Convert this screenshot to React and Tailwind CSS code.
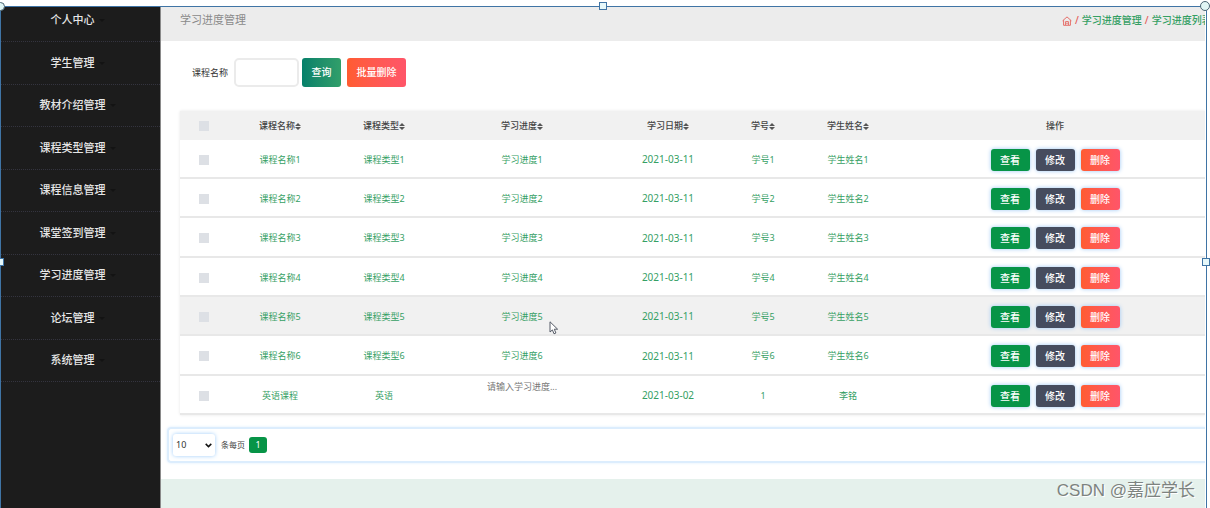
import clsx from 'clsx';

const menu = [
  '个人中心',
  '学生管理',
  '教材介绍管理',
  '课程类型管理',
  '课程信息管理',
  '课堂签到管理',
  '学习进度管理',
  '论坛管理',
  '系统管理',
];

const columns = ['课程名称', '课程类型', '学习进度', '学习日期', '学号', '学生姓名'];

const rows = [1, 2, 3, 4, 5, 6].map((n) => ({
  id: n,
  course: `课程名称${n}`,
  type: `课程类型${n}`,
  progress: `学习进度${n}`,
  date: '2021-03-11',
  number: `学号${n}`,
  student: `学生姓名${n}`,
}));

rows.push({
  id: 7,
  course: '英语课程',
  type: '英语',
  progress: '',
  date: '2021-03-02',
  number: '1',
  student: '李铭',
});

const activeRow = 5;

function SortIcon() {
  return (
    <svg className="inline-block h-[7px] w-[6px] align-middle" viewBox="0 0 6 7" fill="#555" aria-hidden="true">
      <path d="M3 0 L6 3 H0 Z M0 4 H6 L3 7 Z" />
    </svg>
  );
}

function HomeIcon() {
  return (
    <svg className="h-[10px] w-[10px] shrink-0" viewBox="0 0 10 10" fill="none" stroke="#e4605a" aria-hidden="true">
      <path d="M0.6 4.8 L5 0.9 L9.4 4.8 M1.6 4.2 V9.3 H8.4 V4.2 M3.6 9 V5.6 H6.4 V9" strokeWidth="0.9" />
      <path d="M4.2 7.4 H5.8" strokeWidth="0.7" />
    </svg>
  );
}

function Pointer() {
  return (
    <svg className="absolute top-6 left-[113px] h-[14px] w-[10px]" viewBox="0 0 10 14" aria-hidden="true">
      <path
        d="M1 0.8 V11 L3.4 8.9 L5 12.8 L6.9 12 L5.3 8.2 H8.6 Z"
        fill="#fff"
        stroke="#555b66"
        strokeWidth="1"
        strokeLinejoin="round"
      />
    </svg>
  );
}

function ActionButton({ className, children }) {
  return (
    <button
      type="button"
      className={clsx(
        'h-[22px] w-[39px] rounded-[3px] text-[10px] leading-[22px] font-medium text-white shadow-[0_0_4px_#9cc8f5]',
        className
      )}
    >
      {children}
    </button>
  );
}

function Checkbox({ label }) {
  return (
    <input
      type="checkbox"
      aria-label={label}
      className="mx-auto block h-[10px] w-[10px] appearance-none bg-[#dde0e5] checked:bg-[#079447]"
    />
  );
}

function Sidebar() {
  return (
    <aside className="w-40 shrink-0 overflow-hidden border-r border-[#8a8a8a] bg-[#1c1c1c]">
      <nav className="-mt-[7px]">
        {menu.map((item) => (
          <a
            key={item}
            href="#"
            className="flex h-[42px] items-center justify-center border-b border-dotted border-[#34343f] text-[11px] font-medium text-[#e6e6e6] even:h-[43px]"
          >
            {item}
            <span className="mr-[6px] ml-1 border-x-[3px] border-t-[3px] border-x-transparent border-t-[#131313]" />
          </a>
        ))}
      </nav>
    </aside>
  );
}

function ProgressTable() {
  return (
    <table className="w-full table-fixed border-collapse text-center text-[9px] shadow-[0_0_3px_#e6e6e6]">
      <colgroup>
        <col className="w-12" />
        <col className="w-[104px]" />
        <col className="w-[104px]" />
        <col className="w-[172px]" />
        <col className="w-[120px]" />
        <col className="w-[70px]" />
        <col className="w-[100px]" />
        <col />
      </colgroup>
      <thead>
        <tr className="h-[29px] bg-[#f1f1f1] text-[#444]">
          <th>
            <Checkbox label="全选" />
          </th>
          {columns.map((name) => (
            <th key={name} className="font-medium">
              {name}
              <SortIcon />
            </th>
          ))}
          <th className="pl-[7px] font-medium">操作</th>
        </tr>
      </thead>
      <tbody>
        {rows.map((row) => (
          <tr
            key={row.id}
            className={clsx(
              'h-[39px] text-[#35a064] shadow-[inset_0_-2px_0_#e8e8e8] nth-[3n]:h-10',
              row.id === activeRow && 'bg-[#f1f1f1]'
            )}
          >
            <td>
              <Checkbox label={row.course} />
            </td>
            <td>{row.course}</td>
            <td>{row.type}</td>
            {row.progress ? (
              <td className="relative">
                {row.progress}
                {row.id === activeRow && <Pointer />}
              </td>
            ) : (
              <td className="pt-1 align-top text-[#777]">请输入学习进度...</td>
            )}
            <td className="text-[10px]">{row.date}</td>
            <td>{row.number}</td>
            <td>{row.student}</td>
            <td className="pl-[7px]">
              <div className="flex justify-center gap-[6px]">
                <ActionButton className="bg-[#079447]">查看</ActionButton>
                <ActionButton className="bg-[#464c5e]">修改</ActionButton>
                <ActionButton className="bg-linear-to-r from-[#ff5c30] to-[#ff5569]">删除</ActionButton>
              </div>
            </td>
          </tr>
        ))}
      </tbody>
    </table>
  );
}

function Pagination() {
  return (
    <div className="mt-3 ml-[6px] flex h-9 items-center rounded-l border-2 border-r-0 border-[#dcedfd] pl-1 text-[8px] text-[#444] shadow-[0_0_3px_#dcedfd]">
      <div className="relative">
        <select
          id="page-size"
          defaultValue="10"
          className="block h-[22px] w-[42px] appearance-none rounded-[3px] bg-white pl-[3px] text-[9px] text-[#333] shadow-[0_0_4px_#9fcdfa]"
        >
          <option>10</option>
          <option>25</option>
          <option>50</option>
        </select>
        <svg
          className="pointer-events-none absolute top-[9px] right-[3px] h-[5px] w-[7px]"
          viewBox="0 0 7 5"
          fill="none"
          stroke="#111"
          strokeWidth="1.5"
          aria-hidden="true"
        >
          <path d="M0.7 0.9 L3.5 3.6 L6.3 0.9" />
        </svg>
      </div>
      <label htmlFor="page-size" className="mr-1 ml-[6px]">
        条每页
      </label>
      <button type="button" className="h-4 w-[18px] rounded-[3px] bg-[#079447] text-[9px] leading-4 text-white">
        1
      </button>
    </div>
  );
}

function Frame() {
  return (
    <div className="pointer-events-none absolute top-[6px] right-[3px] bottom-0 left-0 border-x border-t border-[#3f74a5]">
      <span className="absolute -top-[5px] -left-[5px] h-[9px] w-[9px] rounded-full border border-[#4b6573] bg-[#e0f5f4]" />
      <span className="absolute -top-[5px] left-1/2 -ml-[5px] h-2 w-2 border border-[#3f74a5] bg-[#e6f8fa]" />
      <span className="absolute -top-[6px] -right-[4px] h-[10px] w-[10px] rounded-full border border-[#4b6573] bg-[#e0f5f4]" />
      <span className="absolute top-1/2 -left-[5px] h-2 w-2 border border-[#3f74a5] bg-[#e6f8fa]" />
      <span className="absolute top-1/2 -right-[4px] h-2 w-2 border border-[#3f74a5] bg-[#e6f8fa]" />
    </div>
  );
}

export default function App() {
  return (
    <div className="relative flex min-h-screen overflow-hidden bg-white pt-[7px] pr-[5px] pl-px font-['Noto_Sans','Noto_Sans_CJK_SC',sans-serif]">
      <Sidebar />

      <main className="flex min-w-0 flex-1 flex-col overflow-hidden">
        <header className="flex h-[34px] items-center justify-between bg-[#ececec] pb-[7px] pl-[19px]">
          <h1 className="text-[11px] text-[#8a8a8a]">学习进度管理</h1>
          <nav className="flex w-[143px] items-center gap-[3px] overflow-hidden text-[10px] font-medium whitespace-nowrap text-[#35a064]">
            <a href="#" aria-label="首页">
              <HomeIcon />
            </a>
            <span className="text-[#e4605a]">/</span>
            <a href="#">学习进度管理</a>
            <span className="text-[#e4605a]">/</span>
            <a href="#">学习进度列表</a>
          </nav>
        </header>

        <form className="mt-[17px] mb-6 flex items-center pl-[31px] text-[9px]">
          <label htmlFor="course" className="mr-[6px] text-[#333]">
            课程名称
          </label>
          <input
            id="course"
            type="text"
            className="h-[29px] w-[65px] rounded-[5px] border-2 border-[#ebebeb] bg-white px-2 outline-none"
          />
          <button
            type="button"
            className="ml-[3px] h-[29px] w-[39px] rounded-[3px] bg-linear-to-r from-[#04806a] to-[#319f6a] text-[10px] font-medium text-white"
          >
            查询
          </button>
          <button
            type="button"
            className="ml-[6px] h-[29px] w-[59px] rounded-[3px] bg-linear-to-r from-[#ff5c30] to-[#ff5569] text-[10px] font-medium text-white"
          >
            批量删除
          </button>
        </form>

        <div className="pl-[19px]">
          <ProgressTable />
        </div>

        <Pagination />

        <footer className="mt-4 min-h-7 flex-1 bg-[#e5f1ec]" />
      </main>

      <Frame />
      <p className="absolute right-[15px] bottom-1 font-['Liberation_Sans','Noto_Sans_CJK_SC',sans-serif] text-[17px] leading-[26px] text-[#7d8380] [text-shadow:1px_1px_0_#fff]">
        CSDN @嘉应学长
      </p>
    </div>
  );
}
